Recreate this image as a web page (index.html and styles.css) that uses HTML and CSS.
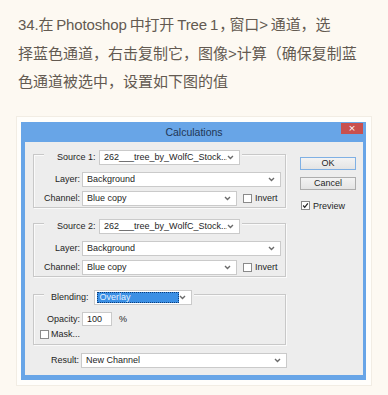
FILE: index.html
```html
<!DOCTYPE html>
<html lang="zh">
<head>
<meta charset="utf-8">
<link rel="stylesheet" href="styles.css">
</head>
<body>
<div class="page">
  <p class="intro"><span class="l1">34.在 Photoshop 中打开 Tree 1<span class="half">，</span>窗口&gt; 通道，选</span><br>择蓝色通道，右击复制它，图像&gt;计算（确保复制蓝<br>色通道被选中，设置如下图的值</p>
  <div class="frame">
    <div class="dialog">
      <div class="titlebar">
        <span></span>
        <span class="title">Calculations</span>
        <span class="close">×</span>
      </div>
      <div class="client">
        <div class="main">
          <div class="group">
            <div class="legend">
              <span class="legend-label">Source 1:</span>
              <div class="select w-src"><span class="val">262___tree_by_WolfC_Stock...</span><svg class="arrow" viewBox="0 0 7 5"><polyline points="1,1 3.5,3.5 6,1"/></svg></div>
            </div>
            <div class="row first">
              <span class="label">Layer:</span>
              <div class="select w-layer"><span class="val">Background</span><svg class="arrow" viewBox="0 0 7 5"><polyline points="1,1 3.5,3.5 6,1"/></svg></div>
            </div>
            <div class="row">
              <span class="label">Channel:</span>
              <div class="select w-chan"><span class="val">Blue copy</span><svg class="arrow" viewBox="0 0 7 5"><polyline points="1,1 3.5,3.5 6,1"/></svg></div>
              <span class="check invert"></span><span class="chk-text">Invert</span>
            </div>
          </div>
          <div class="group g2">
            <div class="legend">
              <span class="legend-label">Source 2:</span>
              <div class="select w-src"><span class="val">262___tree_by_WolfC_Stock...</span><svg class="arrow" viewBox="0 0 7 5"><polyline points="1,1 3.5,3.5 6,1"/></svg></div>
            </div>
            <div class="row first">
              <span class="label">Layer:</span>
              <div class="select w-layer"><span class="val">Background</span><svg class="arrow" viewBox="0 0 7 5"><polyline points="1,1 3.5,3.5 6,1"/></svg></div>
            </div>
            <div class="row">
              <span class="label">Channel:</span>
              <div class="select w-chan"><span class="val">Blue copy</span><svg class="arrow" viewBox="0 0 7 5"><polyline points="1,1 3.5,3.5 6,1"/></svg></div>
              <span class="check invert"></span><span class="chk-text">Invert</span>
            </div>
          </div>
          <div class="group g3">
            <div class="legend blend">
              <span class="blend-label">Blending:</span>
              <div class="select w-blend"><span class="sel-val">Overlay</span><svg class="arrow" viewBox="0 0 7 5"><polyline points="1,1 3.5,3.5 6,1"/></svg></div>
            </div>
            <div class="row first">
              <span class="label">Opacity:</span>
              <div class="input">100</div>
              <span class="pct">%</span>
            </div>
            <div class="row mask">
              <span class="check"></span><span class="mask-text">Mask...</span>
            </div>
          </div>
          <div class="row result">
            <span class="label">Result:</span>
            <div class="select w-result"><span class="val">New Channel</span><svg class="arrow" viewBox="0 0 7 5"><polyline points="1,1 3.5,3.5 6,1"/></svg></div>
          </div>
        </div>
        <div class="side">
          <div class="btn ok">OK</div>
          <div class="btn cancel">Cancel</div>
          <div class="preview"><span class="check checked"><svg viewBox="0 0 9 9"><polyline points="1.5,4.5 3.5,6.8 7.5,1.8"/></svg></span><span class="chk-text">Preview</span></div>
        </div>
      </div>
    </div>
  </div>
</div>
</body>
</html>
```
FILE: styles.css
```css
* { box-sizing: border-box; }
html, body { margin: 0; padding: 0; }
body {
  background: #fdf9f2;
  width: 388px;
  height: 395px;
  overflow: hidden;
}
.page { padding: 10px 0 0 0; }
.intro {
  margin: 0 0 0 18px;
  font-family: "Liberation Sans", "Noto Sans CJK SC", sans-serif;
  font-size: 15px;
  line-height: 28.5px;
  color: #635a51;
  white-space: nowrap;
}
.l1 { word-spacing: -1px; letter-spacing: -0.15px; }
.half {
  font-family: "Noto Sans CJK SC", sans-serif;
  font-feature-settings: "halt";
  margin-left: 1px;
  margin-right: 3px;
}
.frame {
  margin: 20px 0 0 17px;
  width: 354px;
  height: 268px;
  padding: 5px 5px 5px 4px;
  background: #fffefb;
  box-shadow: 0 0 0 1px #f2ede4;
}
.dialog {
  width: 345px;
  height: 258px;
  background: #68a5e7;
  padding: 0 3px 5px 4px;
  display: flex;
  flex-direction: column;
}
.titlebar {
  height: 20px;
  display: grid;
  grid-template-columns: 22px 1fr 22px;
  align-items: start;
}
.title {
  text-align: center;
  font-family: "Liberation Sans", sans-serif;
  font-size: 10.5px;
  line-height: 20px;
  color: #1f3655;
}
.close {
  margin-top: 1px;
  height: 11px;
  background: #c9504e;
  color: #fff;
  font-family: "DejaVu Sans", sans-serif;
  font-size: 9px;
  line-height: 11px;
  text-align: center;
}
.client {
  flex: 1;
  background: #ededed;
  display: flex;
  padding: 12px 0 7px 8px;
  font-family: "Liberation Sans", sans-serif;
  font-size: 9px;
  color: #1e1e1e;
}
.main { width: 255px; }
.group {
  width: 253px;
  border: 1px solid #c8c8c8;
  box-shadow: inset 1px 1px 0 #fafafa, 1px 1px 0 #fafafa;
  padding-bottom: 1px;
}
.g2 { margin-top: 15px; }
.g3 { margin-top: 17px; padding-bottom: 4px; }
.legend {
  display: flex;
  align-items: center;
  margin: -5px 0 0 10px;
  padding: 0 2px 0 13px;
  background: #ededed;
  width: max-content;
  height: 15px;
}
.legend.blend { padding-left: 7px; }
.legend-label {
  width: 40px;
  margin-right: 2px;
}
.blend-label { margin-right: 5px; }
.row {
  display: flex;
  align-items: center;
  height: 15px;
  margin-top: 4px;
}
.row.first { margin-top: 7px; }
.label {
  width: 46px;
  text-align: right;
  margin-right: 2px;
}
.select {
  height: 15px;
  border: 1px solid #cacaca;
  background: #fff;
  display: flex;
  align-items: center;
  justify-content: space-between;
  padding: 0 5px 0 4px;
}
.val { white-space: nowrap; overflow: hidden; }
.arrow {
  width: 7px;
  height: 5px;
  fill: none;
  stroke: #6b6b6b;
  stroke-width: 1.4;
}
.w-src { width: 141px; }
.w-layer { width: 199px; }
.w-chan { width: 155px; }
.w-blend { width: 98px; padding-left: 2px; }
.w-result { width: 206px; }
.sel-val {
  width: 82px;
  height: 11px;
  line-height: 9px;
  background: #3b8fe4;
  border: 1px dotted #0b3d7a;
  color: #e6f2ff;
  padding-left: 2px;
}
.check {
  width: 9px;
  height: 9px;
  border: 1px solid #8a8a8a;
  background: #fff;
  display: inline-block;
  flex: none;
}
.invert { margin-left: 6px; }
.chk-text { margin-left: 3px; }
.input {
  width: 30px;
  height: 14px;
  border: 1px solid #cacaca;
  background: #fff;
  padding-left: 4px;
  line-height: 12px;
}
.pct { margin-left: 7px; }
.row.mask { margin-top: 2px; height: 11px; }
.mask .check { margin-left: 6px; }
.mask-text { margin-left: 2px; }
.row.result { margin-top: 8px; }
.side {
  margin-left: 12px;
  padding-top: 3px;
  width: 56px;
}
.btn {
  height: 13px;
  border: 1px solid #adadad;
  background: linear-gradient(#f3f3f3, #e4e4e4);
  text-align: center;
  line-height: 11px;
}
.btn.ok { border-color: #7fb0e4; }
.btn.cancel { margin-top: 7px; }
.preview {
  display: flex;
  align-items: center;
  margin-top: 11px;
  margin-left: 1px;
}
.checked svg {
  display: block;
  width: 7px;
  height: 7px;
  fill: none;
  stroke: #222;
  stroke-width: 1.6;
}
```
